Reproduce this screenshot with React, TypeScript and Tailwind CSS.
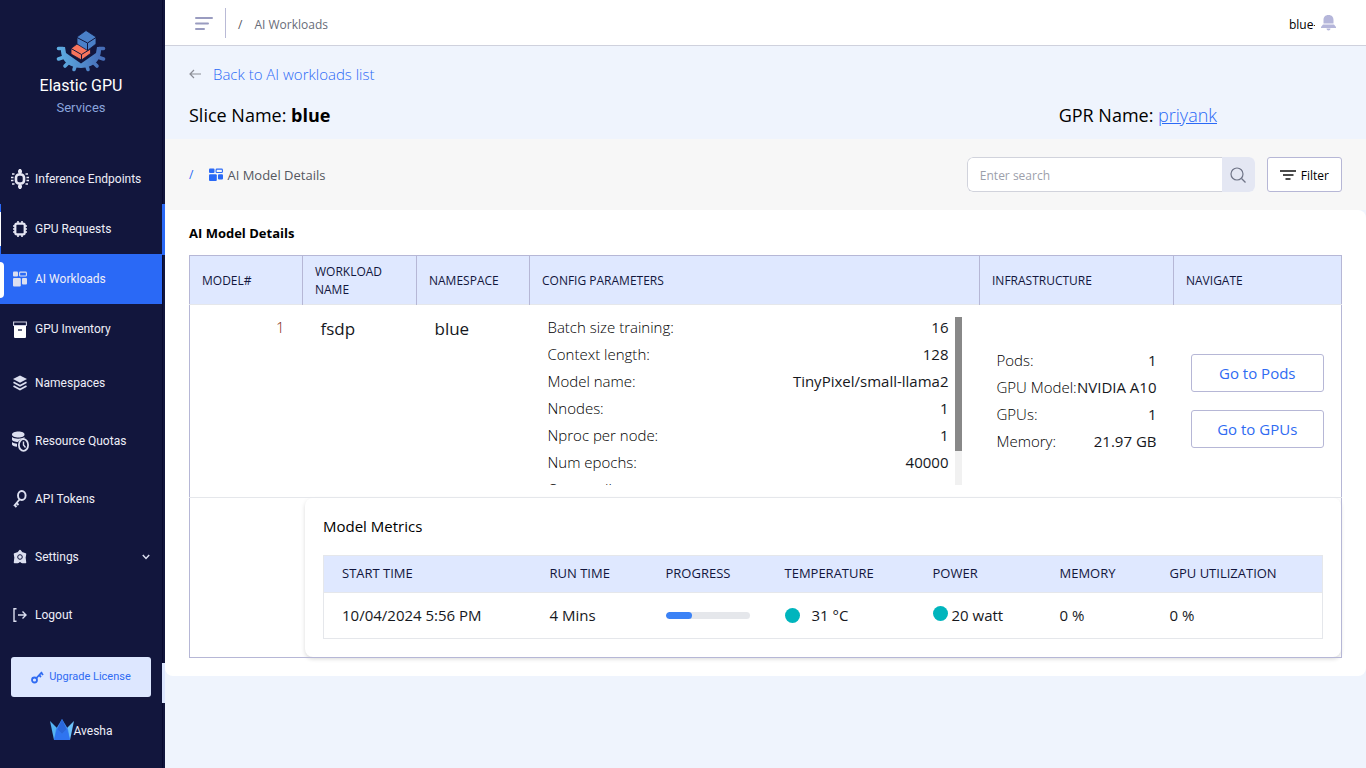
import type { ReactNode } from "react";

const configParams = [
  { label: "Batch size training:", value: "16" },
  { label: "Context length:", value: "128" },
  { label: "Model name:", value: "TinyPixel/small-llama2" },
  { label: "Nnodes:", value: "1" },
  { label: "Nproc per node:", value: "1" },
  { label: "Num epochs:", value: "40000" },
  { label: "Output dir:", value: "" },
];

const infrastructure = [
  { label: "Pods:", value: "1" },
  { label: "GPU Model:", value: "NVIDIA A10" },
  { label: "GPUs:", value: "1" },
  { label: "Memory:", value: "21.97 GB" },
];

const progress = 32;

function Logo() {
  return (
    <svg width="50" height="42" viewBox="0 0 50 42" aria-hidden="true">
      <defs>
        <linearGradient id="gear" gradientUnits="userSpaceOnUse" x1="0" y1="0" x2="50" y2="0">
          <stop offset="0" stopColor="#5fb0e4" />
          <stop offset="1" stopColor="#4468b4" />
        </linearGradient>
      </defs>
      <path d="M5 17l4 0 1 6 15 10.500L40 23l1-6 4 0c1 13-7 20.500-20 21C12 37.500 4 30 5 17z" fill="url(#gear)" />
      <path
        d="M7 18.500H2.500M7 27.500l-4.500 1.500M12 33l-3 3M19 36.500L18 39.500M43 18.500h4.500M43 27.500l4.500 1.500M38 33l3 3M31 36.500l1 3"
        stroke="url(#gear)"
        strokeWidth="3.600"
        strokeLinecap="round"
        fill="none"
      />
      <path d="M15 18.500l6-4.500 4 1 9.500 4v4.500l-9 6.500L15 24z" fill="#f8745c" stroke="#12163d" strokeWidth=".8" />
      <path d="M15 18.500l10.500 6 9-5.500M25.500 24.500V30" fill="none" stroke="#12163d" />
      <path d="M30 .5l10 6.500v7l-8.500 6.500L21 14V7z" fill="#4a80c8" stroke="#12163d" strokeWidth=".8" />
      <path d="M21 7.500l10.500 5.500L40 7.500M31.500 13v7.500" fill="none" stroke="#12163d" />
    </svg>
  );
}

function WidgetsIcon({ className }: { className?: string }) {
  return (
    <svg width="14" height="14" viewBox="0 0 14 14" fill="currentColor" className={className} aria-hidden="true">
      <rect x="0" y="0.500" width="5.500" height="4.500" rx="1" />
      <rect x="7.100" y="1.100" width="6.300" height="3.400" rx=".8" fill="none" stroke="currentColor" strokeWidth="1.100" />
      <rect x="0" y="6.200" width="7.800" height="6.800" rx="1" />
      <rect x="9" y="6.200" width="5" height="5.300" rx="1" />
    </svg>
  );
}

const icons: Record<string, ReactNode> = {
  inference: (
    <svg width="18" height="22" viewBox="0 0 18 22" fill="none" stroke="#e6e6f3">
      <rect x="5" y="6.500" width="8" height="9" rx="3" strokeWidth="2.600" />
      <path d="M9 1v5M9 16v5" strokeWidth="2.400" />
      <path d="M7 3.500h4M7 18.500h4" strokeWidth="2.400" />
      <path d="M1 6h2.500M0 9.500h2.500M0 12.500h2.500M1 16h2.500M14.500 6H17M15.500 9.500H18M15.500 12.500H18M14.500 16H17" strokeWidth="1.500" />
    </svg>
  ),
  requests: (
    <svg width="14" height="16" viewBox="0 0 14 16" fill="none" stroke="#e6e6f3">
      <rect x="2.300" y="2.700" width="9.400" height="10.600" rx="1.500" strokeWidth="2.200" />
      <path d="M5 0v2M9 0v2M5 14v2M9 14v2M0 5h2M0 8h2M0 11h2M12 5h2M12 8h2M12 11h2" strokeWidth="1.600" />
    </svg>
  ),
  workloads: (
    <svg width="14" height="16" viewBox="0 0 14 16" fill="#dcdff0">
      <rect x="0" y="0.500" width="5" height="5" rx="1" />
      <rect x="6.600" y="1.100" width="6.800" height="3.900" rx=".8" fill="none" stroke="#dcdff0" strokeWidth="1.100" />
      <rect x="0" y="7" width="7.800" height="8.500" rx="1" />
      <rect x="9" y="7" width="5" height="6.500" rx="1" />
    </svg>
  ),
  inventory: (
    <svg width="14" height="17" viewBox="0 0 14 17">
      <path d="M.6 1h12.800v3.500H.6z" fill="none" stroke="#cfd0e2" strokeWidth="1.100" />
      <path d="M1 5h12v11a1 1 0 0 1-1 1H2a1 1 0 0 1-1-1z" fill="#fff" />
      <path d="M5 9h4" stroke="#12163d" strokeWidth="1.300" />
    </svg>
  ),
  namespaces: (
    <svg width="14" height="16" viewBox="0 0 14 16" fill="none" stroke="#dcdff0" strokeWidth="1.700">
      <path d="M7 .5L14 4 7 7.800 0 4z" fill="#dcdff0" stroke="none" />
      <path d="M.5 7.300L7 10.800l6.500-3.500M.5 11L7 14.600 13.500 11" />
    </svg>
  ),
  quotas: (
    <svg width="17" height="21" viewBox="0 0 17 21">
      <path d="M0 3.500C0 1.500 3 .5 6.500.5s6 1 6 3-2.500 3-6 3-6.500-1-6.500-3z" fill="#dcdff0" />
      <path d="M0 6c2 2.300 10 2.300 12.500 0v1.800C9 8 7 9.500 6 11 3 11 0 10 0 8.500zM0 11c1 1.200 3.500 1.700 5 1.700v3C2.500 15.500 0 14.500 0 13.500z" fill="#dcdff0" />
      <ellipse cx="11.500" cy="14" rx="4.600" ry="5.800" fill="#12163d" stroke="#dcdff0" strokeWidth="1.800" />
      <path d="M11.500 10.500V14l2 2.500" fill="none" stroke="#dcdff0" strokeWidth="1.400" />
    </svg>
  ),
  tokens: (
    <svg width="14" height="18" viewBox="0 0 14 18" fill="none" stroke="#dcdff0" strokeWidth="1.900">
      <ellipse cx="8.800" cy="5.500" rx="3.800" ry="4.500" />
      <path d="M6.500 9.500L1 16M3.500 13l2 2M1.500 15l2 2" />
    </svg>
  ),
  settings: (
    <svg width="14" height="16" viewBox="0 0 14 16">
      <path
        d="M7 1.500l1.800 2.300 3.700 1.200-.6 3.500.6 5H9.500L7 12.500l-2.500 1h-3l.6-5-.6-3.500 3.700-1.200z"
        fill="#dcdff0"
        stroke="#dcdff0"
        strokeWidth="1.500"
        strokeLinejoin="round"
      />
      <circle cx="7" cy="8" r="2.300" fill="#dcdff0" stroke="#12163d" />
      <path d="M7 13v2.500" stroke="#12163d" />
    </svg>
  ),
  logout: (
    <svg width="14" height="14" viewBox="0 0 14 14" fill="none" stroke="#dcdff0" strokeWidth="1.400">
      <path d="M3.500.8H1v12.400h2.500M5 7h8M9.500 3.500L13 7l-3.500 3.500" />
    </svg>
  ),
};

type NavItemProps = {
  icon: string;
  label: string;
  tall?: boolean;
  active?: boolean;
  marked?: boolean;
  arrow?: boolean;
};

function NavItem({ icon, label, tall, active, marked, arrow }: NavItemProps) {
  return (
    <a
      href="#"
      className={`relative flex items-center pr-3 ${tall ? "h-[58px]" : "h-[50px]"} ${active ? "bg-[#2a69f6]" : ""}`}
    >
      {active && <span className="absolute left-0 top-2 h-9 w-1 rounded-r-md bg-white" />}
      {marked && <span className="absolute inset-y-0 left-0 w-px border-y-8 border-[#2a69f6] bg-white" />}
      <span className="flex w-10 shrink-0 justify-center">{icons[icon]}</span>
      <span className="-ml-[5px] flex-1 whitespace-nowrap">{label}</span>
      {arrow && (
        <svg width="8" height="6" viewBox="0 0 8 6" fill="none" stroke="#dcdff0" strokeWidth="1.500" aria-hidden="true">
          <path d="M.8 1L4 4.500 7.200 1" />
        </svg>
      )}
    </a>
  );
}

function Sidebar() {
  return (
    <aside className="flex w-[165px] shrink-0 bg-[#12163d] font-[Roboto,sans-serif] text-[#eeeef8]">
      <div className="flex flex-1 flex-col">
        <div className="flex h-[154px] flex-col items-center pt-[30px]">
          <Logo />
          <p className="mt-1 text-base leading-5 text-white">Elastic GPU</p>
          <p className="mt-1 text-[13px] leading-4 text-[#8aa4dc]">Services</p>
        </div>
        <nav className="text-xs">
          <NavItem icon="inference" label="Inference Endpoints" />
          <NavItem icon="requests" label="GPU Requests" marked />
          <NavItem icon="workloads" label="AI Workloads" active />
          <NavItem icon="inventory" label="GPU Inventory" />
          <NavItem icon="namespaces" label="Namespaces" tall />
          <NavItem icon="quotas" label="Resource Quotas" tall />
          <NavItem icon="tokens" label="API Tokens" tall />
          <NavItem icon="settings" label="Settings" tall arrow />
          <NavItem icon="logout" label="Logout" tall />
        </nav>
        <button className="mx-[11px] mt-[13px] flex h-10 items-center justify-center gap-[5px] rounded-[3px] bg-[#dde7ff] text-[11px] text-[#2f6bf2]">
          <svg width="13" height="14" viewBox="0 0 13 14" fill="none" stroke="#2f6bf2" strokeWidth="1.800" aria-hidden="true">
            <circle cx="3.500" cy="10" r="2.500" />
            <path d="M5.500 8L11 2M8 5l2 2M10 2.500L12 5" />
          </svg>
          Upgrade License
        </button>
        <div className="mt-[21px] flex items-end justify-center text-xs leading-[18px]">
          <svg width="24" height="22" viewBox="0 0 24 22" aria-hidden="true">
            <path d="M0 3l8 8-3 11H4z" fill="#54b4f4" />
            <path d="M24 3l-8 8 3 11h1z" fill="#6cc0f8" />
            <path d="M12 1l6 10 2 11H4l2-11z" fill="#3f8cf2" />
            <path d="M4 22l3-12 5 6 5-6 3 12z" fill="#2f74f0" />
            <path d="M12 1l4.500 10L12 16l-4.500-5z" fill="#2a66da" />
          </svg>
          Avesha
        </div>
      </div>
      <div className="flex w-[3px] flex-col">
        <div className="h-[204px] border-l border-[#080a30]" />
        <div className="h-[51px] bg-[#2a69f6]" />
        <div className="h-[408px] border-l border-[#080a30]" />
        <div className="h-10 bg-[#dde7ff]" />
        <div className="flex-1 border-l border-[#080a30]" />
      </div>
    </aside>
  );
}

function TopBar() {
  return (
    <header className="flex h-[46px] items-center border-b border-[#cfd1dd] bg-white px-[30px] text-xs">
      <button aria-label="Toggle menu">
        <svg width="18" height="14" viewBox="0 0 18 14" stroke="#9a9cc0" strokeWidth="2" strokeLinecap="round" aria-hidden="true">
          <path d="M1 2h16M1 7.500h12M1 13h8" />
        </svg>
      </button>
      <span className="ml-3 h-[30px] w-px bg-[#b9bad6]" />
      <span className="ml-3 pt-1 text-[#55575f]">/</span>
      <span className="ml-3 pt-1 font-medium text-[#686c78]">AI Workloads</span>
      <span className="ml-auto w-[26px] overflow-hidden whitespace-nowrap pt-1 text-black">blue-</span>
      <button aria-label="Notifications" className="ml-[6px]">
        <svg width="15" height="16" viewBox="0 0 15 16" fill="#b5b6da" aria-hidden="true">
          <path d="M7.500 0C4 0 2.500 2.300 2.500 5v3.500h10V5c0-2.700-1.500-5-5-5zM2 9.500h11l2 2.500v1H0v-1zM5.500 13.500h4a2 2 0 0 1-4 0z" />
        </svg>
      </button>
    </header>
  );
}

function DetailRow({ label, value }: { label: string; value: string }) {
  return (
    <div className="flex h-[27px] shrink-0 justify-between whitespace-nowrap leading-5">
      <dt className="font-light text-black">{label}</dt>
      <dd className="font-medium">{value}</dd>
    </div>
  );
}

function ModelMetrics() {
  return (
    <div className="ml-[115px] rounded-lg px-[18px] pb-[18px] pt-4 shadow-[0_2px_4px_rgba(0,0,0,0.15)]">
      <h3 className="text-[15px] font-medium leading-6 text-black">Model Metrics</h3>
      <table className="mt-[17px] w-full table-fixed border border-[#e5e7eb] text-left">
        <thead className="bg-[#dfe8ff] text-[13px] text-[#12163d]">
          <tr className="h-[37px] border-b border-[#e5e7eb]">
            <th className="w-[208px] pl-[18px] font-normal">START TIME</th>
            <th className="w-[116px] pl-[18px] font-normal">RUN TIME</th>
            <th className="w-[119px] pl-[18px] font-normal">PROGRESS</th>
            <th className="w-[148px] pl-[18px] font-normal">TEMPERATURE</th>
            <th className="w-[127px] pl-[18px] font-normal">POWER</th>
            <th className="w-[110px] pl-[18px] font-normal">MEMORY</th>
            <th className="pl-[18px] font-normal">GPU UTILIZATION</th>
          </tr>
        </thead>
        <tbody className="text-[15px] text-[#16181d]">
          <tr className="h-[46px]">
            <td className="pl-[18px]">10/04/2024 5:56 PM</td>
            <td className="pl-[18px]">4 Mins</td>
            <td className="pl-[18px]">
              <div className="h-[7px] w-[84px] overflow-hidden rounded-full bg-[#e5e7eb]">
                <div className="h-full rounded-full bg-[#3b82f6]" style={{ width: `${progress}%` }} />
              </div>
            </td>
            <td className="pl-[18px]">
              <div className="flex items-center gap-3">
                <span className="size-[15px] rounded-full bg-[#00b5bd]" />
                31 °C
              </div>
            </td>
            <td className="pl-[18px]">
              <div className="flex items-center gap-1">
                <span className="mb-1 size-[15px] rounded-full bg-[#00b5bd]" />
                20 watt
              </div>
            </td>
            <td className="pl-[18px]">0 %</td>
            <td className="pl-[18px]">0 %</td>
          </tr>
        </tbody>
      </table>
    </div>
  );
}

function ModelTable() {
  return (
    <table className="w-full table-fixed border border-[#b6b7d6] text-left">
      <thead className="bg-[#dfe8ff] text-xs leading-[18px] text-[#12163d]">
        <tr className="h-[49px] border-b border-[#e5e7eb]">
          <th className="w-[113px] border-r border-[#b6b7d6] px-3 pt-[2px] font-normal">MODEL#</th>
          <th className="w-[114px] border-r border-[#b6b7d6] px-3 pt-[2px] font-normal">WORKLOAD NAME</th>
          <th className="w-[113px] border-r border-[#b6b7d6] px-3 pt-[2px] font-normal">NAMESPACE</th>
          <th className="border-r border-[#b6b7d6] px-3 pt-[2px] font-normal">CONFIG PARAMETERS</th>
          <th className="w-[194px] border-r border-[#b6b7d6] px-3 pt-[2px] font-normal">INFRASTRUCTURE</th>
          <th className="w-[168px] px-3 pt-[2px] font-normal">NAVIGATE</th>
        </tr>
      </thead>
      <tbody className="text-[15px] text-[#16181d]">
        <tr className="border-b border-[#e5e7eb]">
          <td className="pr-[18px] pt-3 text-right align-top font-light leading-5 text-[#7b2c10]">1</td>
          <td className="pl-[18px] pt-3 align-top text-[17px] font-medium leading-6">fsdp</td>
          <td className="pl-[18px] pt-3 align-top text-[17px] font-medium leading-6">blue</td>
          <td className="px-[18px] py-3">
            <div className="flex h-[168px] gap-[6px]">
              <dl className="flex flex-1 flex-col overflow-hidden">
                {configParams.map((p) => (
                  <DetailRow key={p.label} label={p.label} value={p.value} />
                ))}
              </dl>
              <div className="w-[7px] bg-[#f1f1f1]">
                <div className="h-4/5 bg-[#888888]" />
              </div>
            </div>
          </td>
          <td className="px-[17px]">
            <dl className="pt-[6px]">
              {infrastructure.map((p) => (
                <DetailRow key={p.label} label={p.label} value={p.value} />
              ))}
            </dl>
          </td>
          <td className="px-[17px]">
            <div className="flex flex-col gap-[18px]">
              <button className="h-[38px] rounded-[3px] border border-[#b6b7d6] font-medium text-[#2f6bf2]">Go to Pods</button>
              <button className="h-[38px] rounded-[3px] border border-[#b6b7d6] font-medium text-[#2f6bf2]">Go to GPUs</button>
            </div>
          </td>
        </tr>
        <tr>
          <td colSpan={6}>
            <ModelMetrics />
          </td>
        </tr>
      </tbody>
    </table>
  );
}

export default function App() {
  return (
    <div className="flex min-h-screen bg-[#eff4fd] font-['Open_Sans','Noto_Sans',sans-serif]">
      <Sidebar />
      <div className="min-w-0 flex-1">
        <TopBar />
        <section className="px-6 pb-[10px] pt-4">
          <a href="#" className="flex items-center gap-3 text-[15px] font-light leading-6 text-[#2a69f6]">
            <svg width="12" height="10" viewBox="0 0 12 10" fill="none" stroke="#8b8d96" strokeWidth="1.200" aria-hidden="true">
              <path d="M12 5H1M5 1L1 5l4 4" />
            </svg>
            Back to AI workloads list
          </a>
          <div className="mt-[15px] flex justify-between pr-[125px] text-lg leading-7 text-black">
            <h1 className="font-medium">
              Slice Name: <span className="font-bold">blue</span>
            </h1>
            <p className="font-medium">
              GPR Name:{" "}
              <a href="#" className="font-light text-[#2a69f6] underline">
                priyank
              </a>
            </p>
          </div>
        </section>

        <section className="flex items-center bg-[#f7f7f7] px-6 py-[18px]">
          <span className="text-xs text-[#2a69f6]">/</span>
          <WidgetsIcon className="ml-4 text-[#2a69f6]" />
          <h2 className="ml-1 pt-[2px] text-[13px] font-medium text-[#55575f]">AI Model Details</h2>
          <form className="ml-auto flex h-[35px] w-72 overflow-hidden rounded-md bg-white">
            <input
              type="text"
              aria-label="Search"
              placeholder="Enter search"
              className="min-w-0 flex-1 rounded-l-md border border-r-0 border-[#d1d3dc] px-3 pt-[2px] text-xs outline-none placeholder:text-[#9ca0ab]"
            />
            <button type="button" aria-label="Search" className="flex w-[33px] items-center justify-center bg-[#e4e7f3]">
              <svg width="16" height="16" viewBox="0 0 16 16" fill="none" stroke="#6f7487" strokeWidth="1.200" aria-hidden="true">
                <circle cx="7" cy="7" r="6" />
                <path d="M11.500 11.500L15.500 15.500" />
              </svg>
            </button>
          </form>
          <button className="ml-3 flex h-[35px] items-center gap-[5px] rounded-[3px] border border-[#b6b7d6] bg-white px-3 text-xs text-black">
            <svg width="16" height="10" viewBox="0 0 16 10" stroke="#111" strokeWidth="1.600" aria-hidden="true">
              <path d="M0 1h16M3 5h10.500M5.500 9h5" />
            </svg>
            <span className="pt-[2px]">Filter</span>
          </button>
        </section>

        <main className="rounded-b-lg rounded-tr-lg bg-white px-6 pb-[18px] pt-[13px]">
          <h2 className="mb-3 text-[13px] font-bold leading-5 text-black">AI Model Details</h2>
          <ModelTable />
        </main>
      </div>
    </div>
  );
}
